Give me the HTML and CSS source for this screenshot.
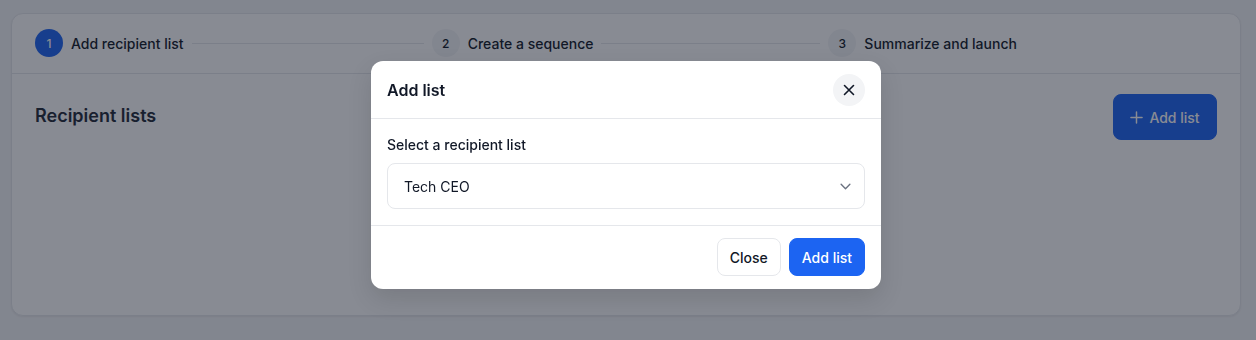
FILE: index.html
```html
<!DOCTYPE html>
<html lang="en">
<head>
<meta charset="utf-8">
<title>Add list</title>
<link rel="stylesheet" href="styles.css">
</head>
<body>
<div class="page">
  <div class="card">
    <ol class="stepper">
      <li class="step">
        <span class="step-num step-num--active">1</span>
        <span class="step-label">Add recipient list</span>
        <span class="step-line"></span>
      </li>
      <li class="step">
        <span class="step-num">2</span>
        <span class="step-label">Create a sequence</span>
        <span class="step-line"></span>
      </li>
      <li class="step">
        <span class="step-num">3</span>
        <span class="step-label">Summarize and launch</span>
      </li>
    </ol>
    <div class="content">
      <div class="content-head">
        <h2 class="content-title">Recipient lists</h2>
        <button class="btn btn-primary btn-lg" type="button">
          <svg class="plus" viewBox="0 0 14 14" width="13" height="13" aria-hidden="true"><path d="M7 1v12M1 7h12" stroke="currentColor" stroke-width="1.6" stroke-linecap="round" fill="none"/></svg>
          Add list
        </button>
      </div>
    </div>
  </div>
</div>

<div class="overlay">
  <div class="modal" role="dialog" aria-labelledby="modal-title">
    <div class="modal-header">
      <h3 class="modal-title" id="modal-title">Add list</h3>
      <button class="icon-btn" type="button" aria-label="Close">
        <svg viewBox="0 0 12 12" width="12" height="12" aria-hidden="true"><path d="M1.5 1.5l9 9M10.5 1.5l-9 9" stroke="currentColor" stroke-width="1.6" stroke-linecap="round" fill="none"/></svg>
      </button>
    </div>
    <div class="modal-body">
      <label class="field-label" for="list-select">Select a recipient list</label>
      <div class="select" id="list-select">
        <span>Tech CEO</span>
        <svg viewBox="0 0 12 8" width="11" height="7" aria-hidden="true"><path d="M1 1.5l5 5 5-5" stroke="currentColor" stroke-width="1.6" stroke-linecap="round" stroke-linejoin="round" fill="none"/></svg>
      </div>
    </div>
    <div class="modal-footer">
      <button class="btn btn-outline" type="button">Close</button>
      <button class="btn btn-primary" type="button">Add list</button>
    </div>
  </div>
</div>
</body>
</html>
```

FILE: styles.css
```css
* { box-sizing: border-box; }

html, body {
  margin: 0;
  padding: 0;
}

body {
  background: #f3f4f6;
  font-family: Inter, "Noto Sans", "Liberation Sans", sans-serif;
  color: #111827;
  height: 340px;
  overflow: hidden;
}

.page {
  padding: 13px 15px 0 11px;
}

.card {
  background: #fff;
  border: 1px solid #e5e7eb;
  border-radius: 12px;
  height: 303px;
  box-shadow: 0 1px 2px rgba(0, 0, 0, 0.06);
}

.stepper {
  list-style: none;
  margin: 0;
  height: 60px;
  padding: 0 15px 1px 23px;
  display: flex;
  align-items: center;
  border-bottom: 1px solid #e5e7eb;
}

.step {
  flex: 1 1 0;
  display: flex;
  align-items: center;
  min-width: 0;
}

.step-num {
  flex: none;
  width: 28px;
  height: 28px;
  border-radius: 50%;
  background: #f3f4f6;
  color: #111827;
  font-size: 12px;
  font-weight: 500;
  display: flex;
  align-items: center;
  justify-content: center;
}

.step-num--active {
  background: #1c64f2;
  color: #fff;
}

.step-label {
  margin-left: 8px;
  font-size: 14px;
  font-weight: 500;
  color: #111827;
  white-space: nowrap;
}

.step-line {
  flex: 1;
  height: 1px;
  background: #e5e7eb;
  margin: 0 8px;
}

.content {
  padding: 20px 23px;
}

.content-head {
  display: flex;
  align-items: center;
  justify-content: space-between;
}

.content-title {
  margin: 0 0 2px;
  font-size: 18px;
  font-weight: 600;
  line-height: 28px;
  color: #1f2937;
}

.btn {
  font-family: inherit;
  font-size: 14px;
  font-weight: 500;
  border-radius: 8px;
  height: 38px;
  padding: 0 12px;
  display: inline-flex;
  align-items: center;
  justify-content: center;
  gap: 6px;
  cursor: pointer;
}

.btn-primary {
  background: #1c64f2;
  color: #fff;
  border: 1px solid #1c64f2;
}

.btn-outline {
  background: #fff;
  color: #111827;
  border: 1px solid #e5e7eb;
}

.btn-lg {
  height: 46px;
  width: 104px;
  padding: 0 16px;
}

.plus { display: block; }

.overlay {
  position: fixed;
  inset: 0;
  background: rgba(17, 24, 39, 0.5);
  display: flex;
  justify-content: center;
  align-items: flex-start;
  padding: 61px 4px 0 0;
}

.modal {
  width: 510px;
  background: #fff;
  border-radius: 12px;
  box-shadow: 0 10px 25px rgba(0, 0, 0, 0.12);
}

.modal-header {
  height: 58px;
  padding: 0 16px;
  display: flex;
  align-items: center;
  justify-content: space-between;
  border-bottom: 1px solid #e5e7eb;
}

.modal-title {
  margin: 0;
  font-size: 16px;
  font-weight: 600;
  color: #111827;
}

.icon-btn {
  width: 32px;
  height: 32px;
  border-radius: 50%;
  border: none;
  background: #f3f4f6;
  color: #111827;
  display: flex;
  align-items: center;
  justify-content: center;
  padding: 0;
  cursor: pointer;
}

.modal-body {
  padding: 16px;
  border-bottom: 1px solid #e5e7eb;
}

.field-label {
  display: block;
  font-size: 14px;
  font-weight: 500;
  line-height: 20px;
  color: #111827;
  margin-bottom: 8px;
}

.select {
  height: 46px;
  border: 1px solid #e5e7eb;
  border-radius: 8px;
  padding: 0 13px 0 16px;
  display: flex;
  align-items: center;
  justify-content: space-between;
  font-size: 14px;
  color: #111827;
}

.select svg {
  color: #6b7280;
}

.modal-footer {
  padding: 12px 16px 13px;
  display: flex;
  justify-content: flex-end;
  gap: 8px;
}
```
